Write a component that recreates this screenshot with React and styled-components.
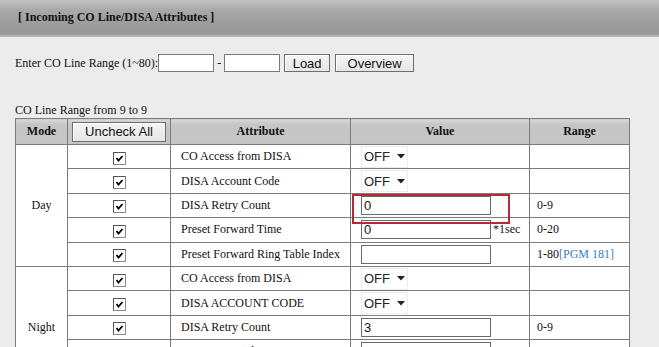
import React from 'react'
import styled, { createGlobalStyle } from 'styled-components'

const GlobalStyle = createGlobalStyle`
    html, body {
        margin: 0;
        padding: 0;
        background: #ececec;
        font-family: "Liberation Serif", "Times New Roman", serif;
        font-size: 12px;
        color: #111;
    }
`

const HeaderBar = styled.div`
    height: 35px;
    display: flex;
    align-items: center;
    padding-left: 18px;
    background: linear-gradient(to bottom, #c4c4c4 0%, #a9a9a9 28%, #9c9c9c 70%, #9a9a9a 100%);
    border-bottom: 2px solid #b4b4b4;
    font-weight: bold;
    font-size: 12px;
    color: #111;
`

const Content = styled.div`
    padding: 0 15px;
`

const RangeForm = styled.div`
    display: flex;
    align-items: center;
    margin-top: 17px;
    height: 18px;
`

const SmallInput = styled.input`
    box-sizing: border-box;
    width: 56px;
    height: 18px;
    margin: 0;
    border: 1px solid #7a7a7a;
    background: #fff;
    padding: 0 2px;
    font: 13px "Liberation Sans", Arial, sans-serif;
`

const Dash = styled.span`
    margin: 0 3px;
`

const FlatButton = styled.button`
    box-sizing: border-box;
    width: ${p => p.w}px;
    height: ${p => p.h || 18}px;
    margin: 0 0 0 ${p => p.ml || 0}px;
    padding: 0;
    background: linear-gradient(to bottom, #f4f4f4, #e6e6e6);
    border: 1px solid #6e6e6e;
    box-shadow: inset 1px 1px 0 #fff;
    font: 13px "Liberation Sans", Arial, sans-serif;
    color: #111;
`

const Caption = styled.div`
    margin-top: 31px;
    line-height: 14px;
    height: 15px;
`

const Table = styled.table`
    border-collapse: collapse;
    width: 614px;
    table-layout: fixed;
    background: #fff;
`

const HeadCell = styled.th`
    height: 25px;
    padding: 0;
    border: 1px solid #7c7c7c;
    background: linear-gradient(to bottom, #d8d8d8 0%, #c6c6c6 20%, #c4c4c4 100%);
    font-weight: bold;
    font-size: 12px;
    text-align: center;
`

const Cell = styled.td`
    height: 23.4px;
    padding: 0 0 0 ${p => p.pl || 0}px;
    border: 1px solid #7c7c7c;
    text-align: ${p => p.center ? 'center' : 'left'};
    vertical-align: middle;
    position: relative;
    white-space: nowrap;
`

const CheckBox = styled.span`
    display: inline-block;
    box-sizing: border-box;
    width: 13px;
    height: 13px;
    margin-top: 2px;
    border: 1px solid #8a8a8a;
    border-top-color: #555;
    border-left-color: #555;
    background: #fff;
    vertical-align: middle;
    svg { display: block; }
`

const Dropdown = styled.span`
    display: inline-flex;
    align-items: center;
    box-sizing: border-box;
    width: 47px;
    height: 22px;
    padding-left: 2px;
    background: #fff;
    border: 1px solid #ececec;
    font: 13px "Liberation Sans", Arial, sans-serif;
    color: #222;
    gap: 7px;
    vertical-align: middle;
`

const ValueInput = styled.input`
    box-sizing: border-box;
    width: 130px;
    height: 19px;
    margin: 0;
    padding: 0 2px;
    border: 1px solid #6a6a6a;
    background: #fff;
    font: 13px "Liberation Sans", Arial, sans-serif;
    color: #111;
    vertical-align: middle;
`

const Suffix = styled.span`
    margin-left: 2px;
    font-size: 12px;
`

const Link = styled.span`
    color: #3a7cc6;
`

const Highlight = styled.div`
    position: absolute;
    left: 1px;
    top: 0;
    width: 158px;
    height: 30px;
    box-sizing: border-box;
    border: 2px solid #b42a35;
    pointer-events: none;
    z-index: 2;
`

const Check = () => (
    <CheckBox>
        <svg width="11" height="11" viewBox="0 0 11 11">
            <path d="M2.5 5 L4.5 7.5 L8.5 3" fill="none" stroke="#000" strokeWidth="1.8" />
        </svg>
    </CheckBox>
)

const Select = ({ value }) => (
    <Dropdown>
        {value}
        <svg width="8" height="5" viewBox="0 0 8 5">
            <path d="M0 0 H8 L4 4.5 Z" fill="#222" />
        </svg>
    </Dropdown>
)

const dayRows = [
    { attr: 'CO Access from DISA', select: 'OFF' },
    { attr: 'DISA Account Code', select: 'OFF' },
    { attr: 'DISA Retry Count', input: '0', range: '0-9', highlight: true },
    { attr: 'Preset Forward Time', input: '0', suffix: '*1sec', range: '0-20' },
    { attr: 'Preset Forward Ring Table Index', input: '', range: '1-80', link: '[PGM 181]' },
]

const nightRows = [
    { attr: 'CO Access from DISA', select: 'OFF' },
    { attr: 'DISA ACCOUNT CODE', select: 'OFF' },
    { attr: 'DISA Retry Count', input: '3', range: '0-9' },
    { attr: 'Preset Forward Time', input: '0', suffix: '*1sec', range: '0-20' },
    { attr: 'Preset Forward Ring Table Index', input: '', range: '1-80', link: '[PGM 181]' },
]

const ModeRows = ({ mode, rows }) => rows.map((row, i) => (
    <tr key={mode + i}>
        {i === 0 && <Cell center rowSpan={rows.length}>{mode}</Cell>}
        <Cell center><Check /></Cell>
        <Cell pl={10}>{row.attr}</Cell>
        <Cell pl={10}>
            {row.select
                ? <Select value={row.select} />
                : <ValueInput defaultValue={row.input} />}
            {row.suffix && <Suffix>{row.suffix}</Suffix>}
            {row.highlight && <Highlight />}
        </Cell>
        <Cell pl={7}>
            {row.range}
            {row.link && <Link>{row.link}</Link>}
        </Cell>
    </tr>
))

export default function App() {
    return (
        <>
            <GlobalStyle />
            <HeaderBar>[ Incoming CO Line/DISA Attributes ]</HeaderBar>
            <Content>
                <RangeForm>
                    <span>Enter CO Line Range (1~80):</span>
                    <SmallInput />
                    <Dash>-</Dash>
                    <SmallInput />
                    <FlatButton w={46} ml={4}>Load</FlatButton>
                    <FlatButton w={79} ml={5}>Overview</FlatButton>
                </RangeForm>
                <Caption>CO Line Range from 9 to 9</Caption>
                <Table>
                    <colgroup>
                        <col style={{ width: 52 }} />
                        <col style={{ width: 103 }} />
                        <col style={{ width: 180 }} />
                        <col style={{ width: 179 }} />
                        <col style={{ width: 100 }} />
                    </colgroup>
                    <thead>
                        <tr>
                            <HeadCell>Mode</HeadCell>
                            <HeadCell><FlatButton w={94} h={20}>Uncheck All</FlatButton></HeadCell>
                            <HeadCell>Attribute</HeadCell>
                            <HeadCell>Value</HeadCell>
                            <HeadCell>Range</HeadCell>
                        </tr>
                    </thead>
                    <tbody>
                        <ModeRows mode="Day" rows={dayRows} />
                        <ModeRows mode="Night" rows={nightRows} />
                    </tbody>
                </Table>
            </Content>
        </>
    )
}
